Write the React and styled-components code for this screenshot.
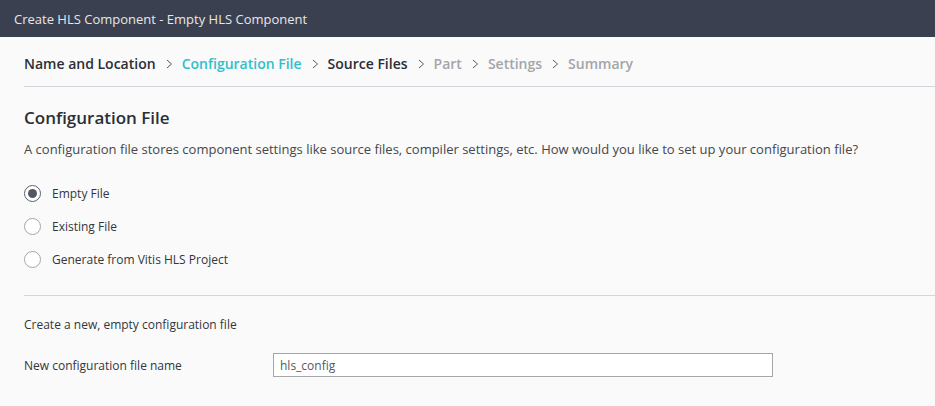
import styled, { createGlobalStyle } from 'styled-components'

const GlobalStyle = createGlobalStyle`
  html, body {
    margin: 0;
    padding: 0;
    background: #fafafa;
    font-family: 'Open Sans', 'Noto Sans', sans-serif;
  }
`

const TitleBar = styled.div`
  height: 37px;
  background: #3b4050;
  color: #e6e7ea;
  font-size: 13px;
  display: flex;
  align-items: center;
  padding-left: 14px;
`

const Body = styled.div`
  padding-left: 24px;
`

const Steps = styled.nav`
  height: 46px;
  padding-top: 3px;
  display: flex;
  align-items: center;
  border-bottom: 1px solid #d3d6dc;
  font-size: 14px;
  font-weight: 600;
`

const Step = styled.span`
  color: ${({ $state }) =>
    $state === 'active' ? '#2fbfcc' : $state === 'done' ? '#2b2e35' : '#a3a5a9'};
`

const Chevron = styled.svg`
  width: 7px;
  height: 10px;
  margin: 1px 9px 0 10px;
  flex-shrink: 0;
`

const Heading = styled.h2`
  margin: 19px 0 0;
  font-size: 17px;
  line-height: 24px;
  font-weight: 600;
  color: #2b2e35;
`

const Description = styled.p`
  margin: 10px 0 0;
  font-size: 13px;
  line-height: 18px;
  color: #44474d;
`

const RadioList = styled.div`
  margin-top: 19px;
  display: flex;
  flex-direction: column;
`

const RadioRow = styled.label`
  height: 33px;
  display: flex;
  align-items: center;
  gap: 11px;
  font-size: 12px;
  color: #33363c;
`

const RadioCircle = styled.span`
  width: 17px;
  height: 17px;
  box-sizing: border-box;
  border-radius: 50%;
  border: 1px solid ${({ $checked }) => ($checked ? '#5a5f6b' : '#a4a6aa')};
  background: #fff;
  display: flex;
  align-items: center;
  justify-content: center;

  &::after {
    content: '';
    width: 9px;
    height: 9px;
    border-radius: 50%;
    background: #535866;
    display: ${({ $checked }) => ($checked ? 'block' : 'none')};
  }
`

const Divider = styled.hr`
  margin: 19px 0 0;
  border: none;
  border-top: 1px solid #d3d6dc;
`

const Hint = styled.div`
  margin-top: 20px;
  font-size: 12px;
  line-height: 18px;
  color: #33363c;
`

const FieldRow = styled.div`
  margin-top: 19px;
  display: flex;
  align-items: center;
`

const FieldLabel = styled.span`
  width: 249px;
  font-size: 12px;
  color: #33363c;
`

const TextInput = styled.input`
  width: 500px;
  height: 24px;
  box-sizing: border-box;
  border: 1px solid #a6a6a8;
  background: #fff;
  padding: 0 6px;
  font-family: 'Open Sans', 'Noto Sans', sans-serif;
  font-size: 12px;
  color: #55585e;
  outline: none;
`

const steps = [
  { label: 'Name and Location', state: 'done' },
  { label: 'Configuration File', state: 'active' },
  { label: 'Source Files', state: 'done' },
  { label: 'Part', state: 'todo' },
  { label: 'Settings', state: 'todo' },
  { label: 'Summary', state: 'todo' },
]

const options = [
  { label: 'Empty File', checked: true },
  { label: 'Existing File', checked: false },
  { label: 'Generate from Vitis HLS Project', checked: false },
]

function ChevronIcon() {
  return (
    <Chevron viewBox='0 0 7 10'>
      <path d='M1 1l4.5 4L1 9' fill='none' stroke='#55585e' strokeWidth='1' />
    </Chevron>
  )
}

export default function App() {
  return (
    <>
      <GlobalStyle />
      <TitleBar>Create HLS Component - Empty HLS Component</TitleBar>
      <Body>
        <Steps>
          {steps.map((s, i) => (
            <span key={s.label} style={{ display: 'contents' }}>
              {i > 0 && <ChevronIcon />}
              <Step $state={s.state}>{s.label}</Step>
            </span>
          ))}
        </Steps>

        <Heading>Configuration File</Heading>
        <Description>
          A configuration file stores component settings like source files, compiler settings, etc. How would you like to set up your configuration file?
        </Description>

        <RadioList>
          {options.map((o) => (
            <RadioRow key={o.label}>
              <RadioCircle $checked={o.checked} />
              {o.label}
            </RadioRow>
          ))}
        </RadioList>

        <Divider />

        <Hint>Create a new, empty configuration file</Hint>

        <FieldRow>
          <FieldLabel>New configuration file name</FieldLabel>
          <TextInput defaultValue='hls_config' />
        </FieldRow>
      </Body>
    </>
  )
}
